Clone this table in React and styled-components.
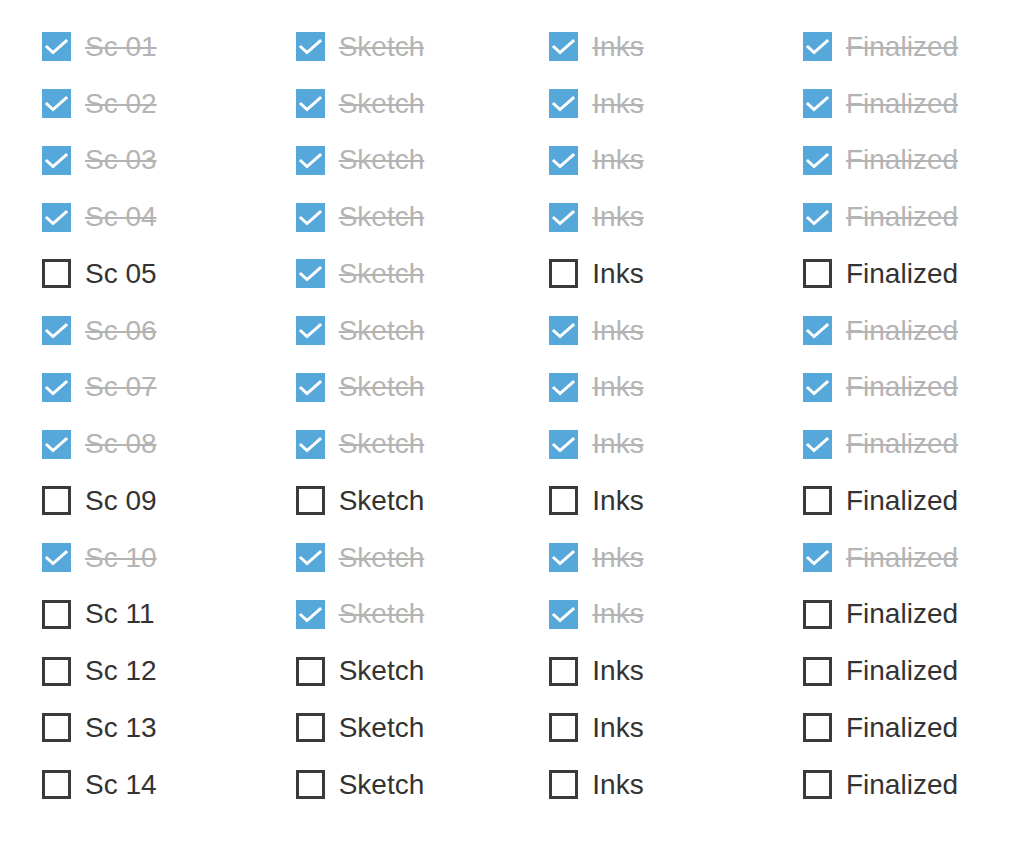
import styled, { createGlobalStyle } from 'styled-components';

const GlobalStyle = createGlobalStyle`
  html, body {
    margin: 0;
    padding: 0;
    background: #ffffff;
  }
  body {
    font-family: "Liberation Sans", Arial, sans-serif;
  }
`

const Board = styled.div`
  display: grid;
  grid-template-columns: repeat(4, 253.67px);
  grid-auto-rows: 56.77px;
  padding: 18.4px 0 0 42px;
`

const Item = styled.label`
  display: flex;
  align-items: center;
  gap: 14px;
  cursor: pointer;
`

const Box = styled.span`
  box-sizing: border-box;
  width: 29px;
  height: 29px;
  flex: none;
  display: flex;
  align-items: center;
  justify-content: center;
  background: ${p => (p.$checked ? '#56a8da' : '#ffffff')};
  border: ${p => (p.$checked ? 'none' : '3px solid #3a3a3a')};
`

const Label = styled.span`
  font-size: 28px;
  line-height: 1;
  color: ${p => (p.$done ? '#b4b4b4' : '#333333')};
  text-decoration: ${p => (p.$done ? 'line-through' : 'none')};
  text-decoration-thickness: 2px;
`

const Check = () => (
  <svg width="29" height="29" viewBox="0 0 29 29">
    <path d="M5 15 L11 20.5 L24 9" fill="none" stroke="#ffffff" strokeWidth="3" strokeLinecap="square" />
  </svg>
)

const rows = [
  [1, 1, 1, 1],
  [1, 1, 1, 1],
  [1, 1, 1, 1],
  [1, 1, 1, 1],
  [0, 1, 0, 0],
  [1, 1, 1, 1],
  [1, 1, 1, 1],
  [1, 1, 1, 1],
  [0, 0, 0, 0],
  [1, 1, 1, 1],
  [0, 1, 1, 0],
  [0, 0, 0, 0],
  [0, 0, 0, 0],
  [0, 0, 0, 0],
]

const stages = ['Sketch', 'Inks', 'Finalized']

export default function App() {
  return (
    <>
      <GlobalStyle />
      <Board>
        {rows.map((row, i) => {
          const names = ['Sc ' + String(i + 1).padStart(2, '0'), ...stages]
          return names.map((name, j) => (
            <Item key={i + '-' + j}>
              <Box $checked={!!row[j]}>{row[j] ? <Check /> : null}</Box>
              <Label $done={!!row[j]}>{name}</Label>
            </Item>
          ))
        })}
      </Board>
    </>
  )
}
